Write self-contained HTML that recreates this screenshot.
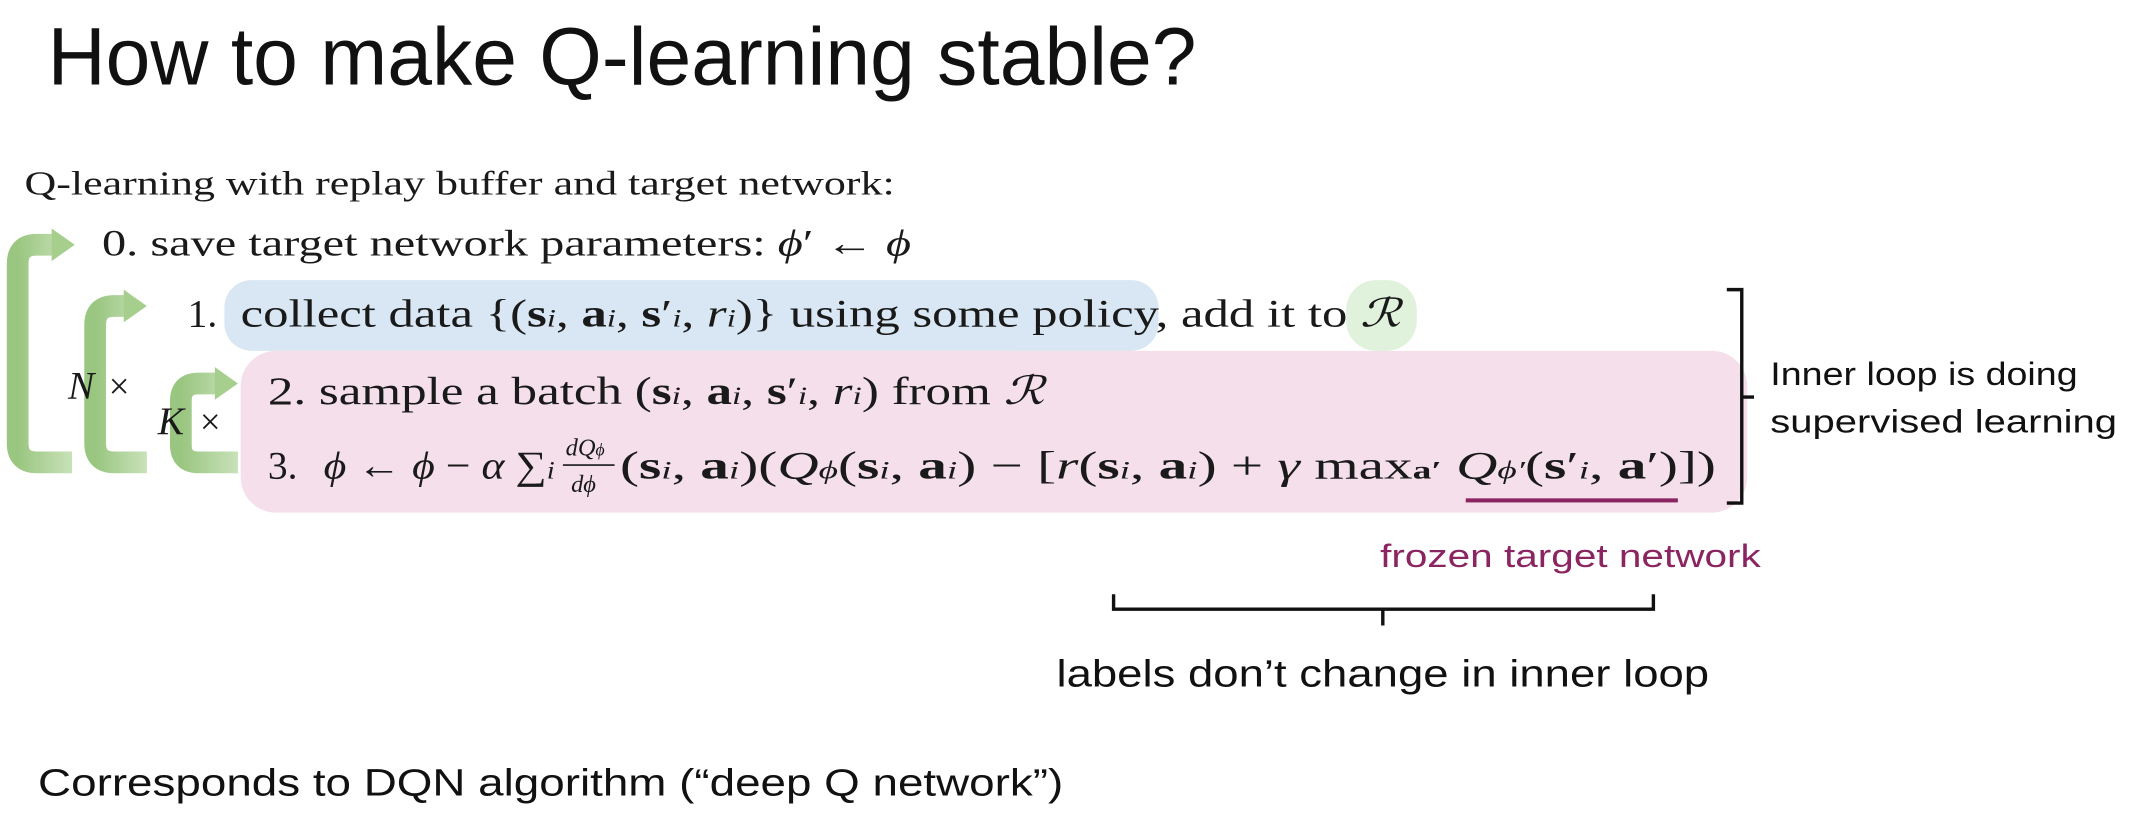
<!DOCTYPE html>
<html><head><meta charset="utf-8"><style>
html,body{margin:0;padding:0;background:#fff;}
svg{display:block}
.s{font-family:"Liberation Sans",sans-serif;fill:#111}
.m{font-family:"Liberation Serif",serif;fill:#1a1a1a}
.i{font-style:italic}
.b{font-weight:bold}
</style></head><body>
<svg width="2132" height="830" viewBox="0 0 1568 610.4" xmlns="http://www.w3.org/2000/svg">
<defs>
<linearGradient id="g" x1="0" x2="1" y1="0" y2="0"><stop offset="0" stop-color="#8fc073"/><stop offset="1" stop-color="#c3dfb2"/></linearGradient>
</defs>
<text class="s" x="35" y="62" font-size="60" textLength="845" lengthAdjust="spacingAndGlyphs">How to make Q-learning stable?</text>
<text class="m" x="18" y="143" font-size="25" textLength="640" lengthAdjust="spacingAndGlyphs">Q-learning with replay buffer and target network:</text>

<rect x="165" y="206" width="687" height="52" rx="20" fill="#d8e7f3"/>
<rect x="990" y="206" width="52" height="52" rx="22" fill="#e0f2dc"/>
<rect x="177" y="258" width="1108" height="119" rx="26" fill="#f4dfea"/>

<text class="m" x="75" y="188" font-size="27" textLength="595" lengthAdjust="spacingAndGlyphs">0. save target network parameters: <tspan class="i">ϕ</tspan>′ ← <tspan class="i">ϕ</tspan></text>
<text class="m" x="138" y="240" font-size="29">1.</text>
<text class="m" x="177" y="240" font-size="29" textLength="853" lengthAdjust="spacingAndGlyphs">collect data {(<tspan class="b">s</tspan><tspan class="i" font-size="19">i</tspan>, <tspan class="b">a</tspan><tspan class="i" font-size="19">i</tspan>, <tspan class="b">s</tspan>′<tspan class="i" font-size="19">i</tspan>, <tspan class="i">r</tspan><tspan class="i" font-size="19">i</tspan>)} using some policy, add it to <tspan class="i">ℛ</tspan></text>
<text class="m" x="197" y="297" font-size="29" textLength="571" lengthAdjust="spacingAndGlyphs">2. sample a batch (<tspan class="b">s</tspan><tspan class="i" font-size="19">i</tspan>, <tspan class="b">a</tspan><tspan class="i" font-size="19">i</tspan>, <tspan class="b">s</tspan>′<tspan class="i" font-size="19">i</tspan>, <tspan class="i">r</tspan><tspan class="i" font-size="19">i</tspan>) from <tspan class="i">ℛ</tspan></text>
<text class="m" x="197" y="352" font-size="29">3.</text>
<text class="m" x="238" y="352" font-size="29" textLength="170" lengthAdjust="spacingAndGlyphs"><tspan class="i">ϕ</tspan> ← <tspan class="i">ϕ</tspan> − <tspan class="i">α</tspan> ∑<tspan class="i" font-size="19">i</tspan></text>
<text class="m i" x="416" y="335" font-size="18">dQ<tspan font-size="13">ϕ</tspan></text>
<line x1="414" y1="342" x2="452" y2="342" stroke="#1a1a1a" stroke-width="1.2"/>
<text class="m i" x="420" y="362" font-size="18">dϕ</text>
<text class="m" x="456" y="352" font-size="29" textLength="806" lengthAdjust="spacingAndGlyphs">(<tspan class="b">s</tspan><tspan class="i" font-size="19">i</tspan>, <tspan class="b">a</tspan><tspan class="i" font-size="19">i</tspan>)(<tspan class="i">Q</tspan><tspan class="i" font-size="19">ϕ</tspan>(<tspan class="b">s</tspan><tspan class="i" font-size="19">i</tspan>, <tspan class="b">a</tspan><tspan class="i" font-size="19">i</tspan>) − [<tspan class="i">r</tspan>(<tspan class="b">s</tspan><tspan class="i" font-size="19">i</tspan>, <tspan class="b">a</tspan><tspan class="i" font-size="19">i</tspan>) + <tspan class="i">γ</tspan> max<tspan class="b" font-size="19">a′</tspan> <tspan class="i">Q</tspan><tspan class="i" font-size="19">ϕ′</tspan>(<tspan class="b">s</tspan>′<tspan class="i" font-size="19">i</tspan>, <tspan class="b">a</tspan>′)])</text>
<rect x="1078" y="366.5" width="156" height="3" fill="#8b2561"/>

<g fill="none" stroke="url(#g)" stroke-width="16" opacity="0.9">
<path d="M53 340 H27 Q13 340 13 326 V194 Q13 180 27 180 H40"/>
<path d="M108 340 H84 Q70 340 70 326 V239 Q70 225 84 225 H93"/>
<path d="M175 340 H146 Q133 340 133 327 V295 Q133 282 146 282 H160"/>
</g>
<g fill="#a6cf8e">
<polygon points="38,168 55,180 38,192"/>
<polygon points="91,213 108,225 91,237"/>
<polygon points="158,270 175,282 158,294"/>
</g>
<text class="m i" x="50" y="293" font-size="29">N</text>
<text class="m" x="80" y="293" font-size="27">×</text>
<text class="m i" x="116" y="319" font-size="29">K</text>
<text class="m" x="147" y="319" font-size="27">×</text>

<path d="M1270 213 H1281 V370 H1270 M1281 292 H1290" fill="none" stroke="#111" stroke-width="2.5"/>
<text class="s" x="1302" y="283" font-size="24" textLength="226" lengthAdjust="spacingAndGlyphs">Inner loop is doing</text>
<text class="s" x="1302" y="318" font-size="24" textLength="255" lengthAdjust="spacingAndGlyphs">supervised learning</text>
<text class="s" x="1015" y="417" font-size="24" textLength="280" lengthAdjust="spacingAndGlyphs" style="fill:#8b2561">frozen target network</text>
<path d="M819 437 V448 H1216 V437 M1017 448 V460" fill="none" stroke="#111" stroke-width="2.5"/>
<text class="s" x="777" y="505" font-size="28" textLength="480" lengthAdjust="spacingAndGlyphs">labels don’t change in inner loop</text>
<text class="s" x="28" y="585" font-size="28" textLength="754" lengthAdjust="spacingAndGlyphs">Corresponds to DQN algorithm (“deep Q network”)</text>
</svg>
</body></html>
